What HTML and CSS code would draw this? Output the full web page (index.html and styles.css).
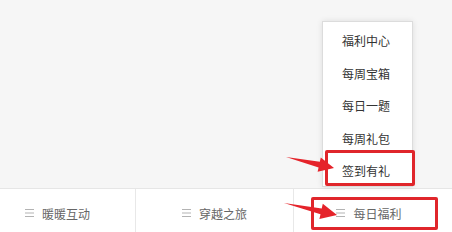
FILE: index.html
```html
<!DOCTYPE html>
<html lang="zh">
<head>
<meta charset="utf-8">
<link rel="stylesheet" href="styles.css">
</head>
<body>
<div class="page">
  <div class="stage">
    <ul class="menu">
      <li class="menu-item">福利中心</li>
      <li class="menu-item">每周宝箱</li>
      <li class="menu-item">每日一题</li>
      <li class="menu-item">每周礼包</li>
      <li class="menu-item">签到有礼</li>
    </ul>
  </div>
  <nav class="bar">
    <div class="tab"><svg class="ham" width="9" height="8" viewBox="0 0 9 8"><path d="M0 0.5H9M0 4H9M0 7.5H9" stroke="#b3b3b3" stroke-width="1"/></svg><span>暖暖互动</span></div>
    <div class="tab"><svg class="ham" width="9" height="8" viewBox="0 0 9 8"><path d="M0 0.5H9M0 4H9M0 7.5H9" stroke="#b3b3b3" stroke-width="1"/></svg><span>穿越之旅</span></div>
    <div class="tab"><svg class="ham" width="9" height="8" viewBox="0 0 9 8"><path d="M0 0.5H9M0 4H9M0 7.5H9" stroke="#b3b3b3" stroke-width="1"/></svg><span>每日福利</span></div>
  </nav>
  <div class="mark mark-menu"></div>
  <div class="mark mark-tab"></div>
  <svg class="arrows" width="452" height="232" viewBox="0 0 452 232">
    <polygon fill="#e5232a" points="286,157 319.8,161.8 320.8,157.4 334,168 317.6,171.8 318.6,167.4"/>
    <polygon fill="#e5232a" points="284,203 321.7,208.6 322.8,203.7 337,215 319.4,219.1 320.5,214.2"/>
  </svg>
</div>
</body>
</html>
```

FILE: styles.css
```css
html, body {
  margin: 0;
  padding: 0;
}
body {
  background: #f6f6f6;
  font-family: "Noto Sans CJK SC", "Noto Sans", sans-serif;
  font-size: 12px;
  overflow: hidden;
}
.page {
  position: relative;
  width: 452px;
  height: 232px;
  display: flex;
  flex-direction: column;
  overflow: hidden;
}
.stage {
  position: relative;
  height: 188px;
  flex: none;
}
.menu {
  position: absolute;
  left: 322px;
  top: 21px;
  width: 91px;
  height: 166px;
  margin: 0;
  padding: 3px 0 0 0;
  box-sizing: border-box;
  list-style: none;
  background: #fff;
  border: 1px solid #dcdcdc;
  box-shadow: 0 0 6px rgba(0, 0, 0, 0.10);
  z-index: 2;
}
.menu-item {
  height: 32.5px;
  line-height: 32.5px;
  padding-left: 19px;
  color: #333;
  white-space: nowrap;
}
.bar {
  flex: 1;
  display: flex;
  margin-left: -20px;
  background: #fff;
  border-top: 1px solid #e6e6e6;
}
.tab {
  width: 156px;
  flex: none;
  display: flex;
  align-items: center;
  justify-content: center;
  gap: 8px;
  padding-top: 5px;
  box-sizing: border-box;
  color: #666;
  border-right: 1px solid #e8e8e8;
}
.tab:nth-child(2) {
  width: 158px;
}
.tab:last-child {
  border-right: none;
  width: 150px;
}
.ham {
  display: block;
}
.mark {
  position: absolute;
  border: 3px solid #e0262b;
  border-radius: 2px;
  box-sizing: border-box;
  z-index: 3;
}
.mark-menu {
  left: 325px;
  top: 150px;
  width: 90px;
  height: 36px;
}
.mark-tab {
  left: 311px;
  top: 197px;
  width: 127px;
  height: 33px;
}
.arrows {
  position: absolute;
  left: 0;
  top: 0;
  z-index: 4;
  pointer-events: none;
}
```
